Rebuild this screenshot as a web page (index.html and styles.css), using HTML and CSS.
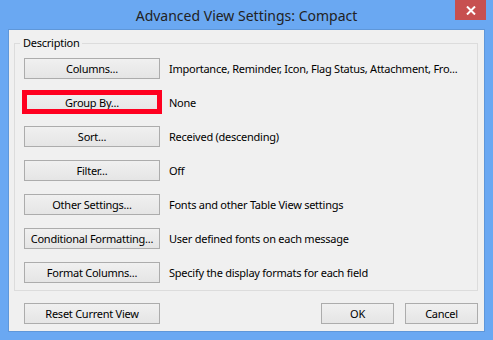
FILE: index.html
```html
<!DOCTYPE html>
<html lang="en">

<head>
    <meta charset="UTF-8" />
    <title>Advanced View Settings: Compact</title>
    <link rel="stylesheet" href="styles.css">
</head>

<body>
    <div class="window">
        <div class="titlebar">
            <span class="title">Advanced View Settings: Compact</span>
            <button class="close">
                <svg width="10" height="9" viewBox="0 0 10 9">
                    <path d="M1 0.5 L9 8.5 M9 0.5 L1 8.5" stroke="#fff" stroke-width="2" />
                </svg>
            </button>
        </div>
        <div class="client">
            <div class="group">
                <span class="legend">Description</span>
                <div class="row">
                    <button class="btn">Columns...</button>
                    <span class="desc">Importance, Reminder, Icon, Flag Status, Attachment, Fro...</span>
                </div>
                <div class="row">
                    <div class="btn-wrap">
                        <button class="btn">Group By...</button>
                        <span class="highlight"></span>
                    </div>
                    <span class="desc">None</span>
                </div>
                <div class="row">
                    <button class="btn">Sort...</button>
                    <span class="desc">Received (descending)</span>
                </div>
                <div class="row">
                    <button class="btn">Filter...</button>
                    <span class="desc">Off</span>
                </div>
                <div class="row">
                    <button class="btn">Other Settings...</button>
                    <span class="desc">Fonts and other Table View settings</span>
                </div>
                <div class="row">
                    <button class="btn">Conditional Formatting...</button>
                    <span class="desc">User defined fonts on each message</span>
                </div>
                <div class="row">
                    <button class="btn">Format Columns...</button>
                    <span class="desc">Specify the display formats for each field</span>
                </div>
            </div>
            <div class="footer">
                <button class="btn">Reset Current View</button>
                <div class="footer-right">
                    <button class="btn small">OK</button>
                    <button class="btn small">Cancel</button>
                </div>
            </div>
        </div>
    </div>
</body>

</html>
```

FILE: styles.css
```css
* {
    box-sizing: border-box;
}

body {
    margin: 0;
    font-family: "Noto Sans", "Open Sans", sans-serif;
    font-size: 11px;
    letter-spacing: -0.25px;
    color: #000;
}

.window {
    width: 493px;
    height: 340px;
    background: #6aa8f2;
    position: relative;
    overflow: hidden;
}

.titlebar {
    height: 29px;
    display: flex;
    align-items: center;
    justify-content: center;
}

.title {
    font-size: 14px;
    letter-spacing: 0;
    color: #222;
    padding-top: 2px;
}

.close {
    position: absolute;
    top: 0;
    left: 455px;
    width: 31px;
    height: 20px;
    border: none;
    padding: 0;
    background: #c75050;
    display: flex;
    align-items: center;
    justify-content: center;
}

.client {
    margin: 0 8px;
    height: 303px;
    background: #f0f0f0;
    border: 1px solid #5f97d9;
    padding: 13px 6px 0 5px;
}

.group {
    position: relative;
    height: 248px;
    border: 1px solid #dcdcdc;
    padding: 14px 0 0 9px;
    display: flex;
    flex-direction: column;
    gap: 13px;
}

.legend {
    position: absolute;
    top: -9px;
    left: 5px;
    padding: 0 3px;
    background: #f0f0f0;
    line-height: 16px;
}

.row {
    display: flex;
    align-items: center;
    gap: 9px;
    white-space: nowrap;
}

.btn {
    flex-shrink: 0;
    width: 136px;
    height: 21px;
    padding: 0;
    border: 1px solid #acacac;
    background: linear-gradient(#f0f0f0, #e5e5e5);
    font-family: inherit;
    font-size: 11px;
    letter-spacing: -0.25px;
    color: #000;
    line-height: 19px;
    white-space: nowrap;
}

.btn.small {
    width: 73px;
}

.btn-wrap {
    position: relative;
    display: flex;
    flex-shrink: 0;
}

.highlight {
    position: absolute;
    top: -2px;
    bottom: -1px;
    left: -2px;
    right: -2px;
    border: 5px solid #ff0020;
}

.footer {
    display: flex;
    justify-content: space-between;
    padding: 12px 0 0 10px;
}

.footer-right {
    display: flex;
    gap: 11px;
}
```
